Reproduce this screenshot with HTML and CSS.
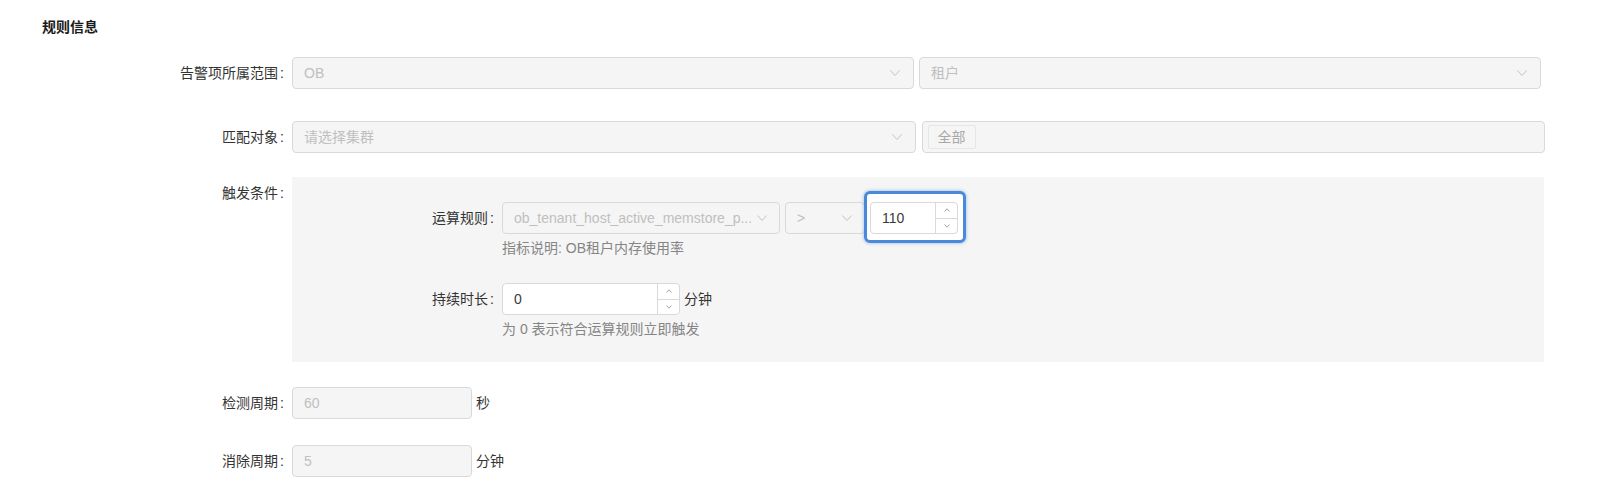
FILE: index.html
```html
<!DOCTYPE html>
<html lang="zh-CN">
<head>
    <meta charset="UTF-8">
    <meta name="viewport" content="width=device-width, initial-scale=1.0">
    <title>规则信息</title>
    <link rel="stylesheet" href="styles.css">
</head>
<body>

    <div class="page">
        <!-- Section title -->
        <h3 class="section-title">规则信息</h3>

        <!-- Scope -->
        <div class="form-item row-scope">
            <label class="form-label">告警项所属范围</label>
            <div class="pair pair-scope">
                <div class="select">
                    <span class="select-value">OB</span>
                    <svg class="arrow" viewBox="0 0 10 6"><polyline points="0.5,0.5 5,5.5 9.5,0.5"/></svg>
                </div>
                <div class="select">
                    <span class="select-value">租户</span>
                    <svg class="arrow" viewBox="0 0 10 6"><polyline points="0.5,0.5 5,5.5 9.5,0.5"/></svg>
                </div>
            </div>
        </div>

        <!-- Target -->
        <div class="form-item row-target">
            <label class="form-label">匹配对象</label>
            <div class="pair pair-target">
                <div class="select">
                    <span class="select-value">请选择集群</span>
                    <svg class="arrow" viewBox="0 0 10 6"><polyline points="0.5,0.5 5,5.5 9.5,0.5"/></svg>
                </div>
                <div class="select multi">
                    <span class="tag">全部</span>
                </div>
            </div>
        </div>

        <!-- Trigger -->
        <div class="form-item row-trigger">
            <label class="form-label">触发条件</label>
            <div class="trigger-box">
                <div class="inner-item">
                    <label class="inner-label">运算规则</label>
                    <div>
                        <div class="rule-controls">
                            <div class="select select-metric">
                                <span class="select-value">ob_tenant_host_active_memstore_p...</span>
                                <svg class="arrow" viewBox="0 0 10 6"><polyline points="0.5,0.5 5,5.5 9.5,0.5"/></svg>
                            </div>
                            <div class="select select-op">
                                <span class="select-value">&gt;</span>
                                <svg class="arrow" viewBox="0 0 10 6"><polyline points="0.5,0.5 5,5.5 9.5,0.5"/></svg>
                            </div>
                            <div class="focus-wrap">
                                <div class="input-number number-threshold">
                                    <span class="input-number-value">110</span>
                                    <div class="stepper">
                                        <span class="step"><svg viewBox="0 0 6 4"><polyline points="0.5,3.5 3,0.8 5.5,3.5"/></svg></span>
                                        <span class="step"><svg viewBox="0 0 6 4"><polyline points="0.5,0.5 3,3.2 5.5,0.5"/></svg></span>
                                    </div>
                                </div>
                            </div>
                        </div>
                        <div class="help">指标说明: OB租户内存使用率</div>
                    </div>
                </div>

                <div class="inner-item">
                    <label class="inner-label">持续时长</label>
                    <div>
                        <div class="with-unit">
                            <div class="input-number number-duration">
                                <span class="input-number-value">0</span>
                                <div class="stepper">
                                    <span class="step"><svg viewBox="0 0 6 4"><polyline points="0.5,3.5 3,0.8 5.5,3.5"/></svg></span>
                                    <span class="step"><svg viewBox="0 0 6 4"><polyline points="0.5,0.5 3,3.2 5.5,0.5"/></svg></span>
                                </div>
                            </div>
                            <span class="unit">分钟</span>
                        </div>
                        <div class="help">为 0 表示符合运算规则立即触发</div>
                    </div>
                </div>
            </div>
        </div>

        <!-- Check period -->
        <div class="form-item row-check">
            <label class="form-label">检测周期</label>
            <div class="with-unit">
                <div class="input">60</div>
                <span class="unit">秒</span>
            </div>
        </div>

        <!-- Clear period -->
        <div class="form-item row-clear">
            <label class="form-label">消除周期</label>
            <div class="with-unit">
                <div class="input">5</div>
                <span class="unit">分钟</span>
            </div>
        </div>
    </div>

</body>
</html>
```

FILE: styles.css
```css
/* Basic Reset */
* {
    margin: 0;
    padding: 0;
    box-sizing: border-box;
}

body {
    font-family: "Liberation Sans", "Noto Sans CJK SC", sans-serif;
    font-size: 14px;
    color: #333;
    background: #fff;
}

.page {
    padding: 16px 0 0 42px;
}

.section-title {
    font-size: 14px;
    font-weight: bold;
    line-height: 22px;
    color: #1a1a1a;
}

/* Form rows */
.form-item {
    display: flex;
    align-items: flex-start;
}

.form-label,
.inner-label {
    flex-shrink: 0;
    text-align: right;
    line-height: 32px;
    padding-right: 8px;
    color: #333;
}

.form-label {
    width: 250px;
}

.inner-label {
    width: 210px;
}

.form-label::after,
.inner-label::after {
    content: ":";
    margin-left: 2px;
}

.row-scope { margin-top: 19px; }
.row-target { margin-top: 32px; }
.row-trigger { margin-top: 24px; }
.row-check { margin-top: 25px; }
.row-clear { margin-top: 26px; }

/* Select boxes */
.pair {
    display: grid;
    grid-template-columns: minmax(0, 1fr) minmax(0, 1fr);
    gap: 5px;
}

.pair-scope {
    width: 1249px;
}

.pair-target {
    width: 1253px;
    gap: 6px;
}

.select {
    height: 32px;
    border: 1px solid #d9d9d9;
    border-radius: 4px;
    background: #f5f5f5;
    color: #bfbfbf;
    padding: 0 13px 0 11px;
    display: flex;
    align-items: center;
    justify-content: space-between;
    gap: 6px;
}

.select-value {
    white-space: nowrap;
    overflow: hidden;
    line-height: 30px;
}

.arrow {
    width: 10px;
    height: 6px;
    flex-shrink: 0;
    fill: none;
    stroke: #c2c2c2;
    stroke-width: 1;
}

.select.multi {
    padding: 0 5px;
    justify-content: flex-start;
}

.tag {
    height: 24px;
    line-height: 22px;
    padding: 0 9px;
    border: 1px solid #e6e6e6;
    border-radius: 2px;
    background: #f5f5f5;
    color: #a8a8a8;
}

/* Trigger condition box */
.trigger-box {
    width: 1252px;
    background: #f5f5f5;
    padding: 25px 0 22px;
}

.inner-item {
    display: flex;
    align-items: flex-start;
}

.inner-item + .inner-item {
    margin-top: 24px;
}

.rule-controls {
    display: flex;
    gap: 5px;
}

.select-metric {
    width: 278px;
    padding-right: 12px;
}

.select-op {
    width: 80px;
    padding-right: 12px;
}

.help {
    margin-top: 3px;
    line-height: 22px;
    color: #858585;
}

/* Number inputs */
.input-number {
    position: relative;
    height: 32px;
    background: #fff;
    border: 1px solid #d9d9d9;
    border-radius: 4px;
    display: flex;
}

.number-threshold {
    width: 88px;
}

.number-duration {
    width: 178px;
}

.input-number-value {
    flex: 1;
    padding-left: 11px;
    line-height: 30px;
    color: #3a3a3a;
}

.stepper {
    width: 22px;
    border-left: 1px solid #d9d9d9;
    display: flex;
    flex-direction: column;
}

.step {
    flex: 1;
    display: flex;
    align-items: center;
    justify-content: center;
}

.step + .step {
    border-top: 1px solid #d9d9d9;
}

.step svg {
    width: 6px;
    height: 4px;
    fill: none;
    stroke: #9a9a9a;
    stroke-width: 0.9;
}

/* Highlight ring around the threshold input */
.focus-wrap {
    position: relative;
}

.focus-wrap::before {
    content: "";
    position: absolute;
    top: -11px;
    left: -6px;
    right: -8px;
    bottom: -9px;
    background: #fff;
    border: 3px solid #4a89d9;
    border-radius: 6px;
    box-shadow: 0 0 3px 1px rgba(74, 137, 217, 0.35);
}

/* Plain inputs with unit */
.with-unit {
    display: flex;
    align-items: center;
}

.unit {
    margin-left: 4px;
    line-height: 32px;
    color: #333;
}

.input {
    width: 180px;
    height: 32px;
    line-height: 30px;
    padding: 0 11px;
    border: 1px solid #d9d9d9;
    border-radius: 4px;
    background: #f5f5f5;
    color: #bfbfbf;
}
```
